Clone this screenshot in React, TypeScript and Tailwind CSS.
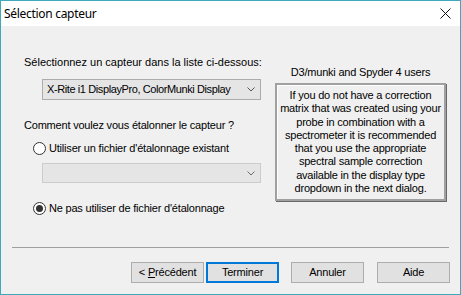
import { useState } from 'react'

const Chevron = ({ color }: { color: string }) => (
  <svg width="8" height="5" viewBox="0 0 8 5" className="block">
    <path d="M0.5 0.5 L4 4 L7.5 0.5" fill="none" stroke={color} strokeWidth="1" />
  </svg>
)

const Radio = ({ checked, label, onClick }: { checked: boolean; label: string; onClick: () => void }) => (
  <div className="flex items-center h-[13px] ml-[9px] cursor-default" onClick={onClick}>
    <div className="w-[13px] h-[13px] rounded-full border border-[#333333] bg-white flex items-center justify-center">
      {checked && <div className="w-[7px] h-[7px] rounded-full bg-[#333333]" />}
    </div>
    <span className="ml-[3px] whitespace-nowrap leading-[13px]">{label}</span>
  </div>
)

const Button = ({ children, primary }: { children: React.ReactNode; primary?: boolean }) => (
  <button
    className={
      primary
        ? 'w-[73px] h-[21px] bg-[#e1e1e1] border-2 border-[#0078d7] flex items-center justify-center leading-[13px]'
        : 'w-[73px] h-[21px] bg-[#e1e1e1] border border-[#adadad] flex items-center justify-center leading-[13px]'
    }
  >
    {children}
  </button>
)

const App = (): JSX.Element => {
  const [mode, setMode] = useState(1)
  return (
    <div
      className="w-[461px] h-[295px] border border-[#3fa9bb] bg-[#f0f0f0] flex flex-col text-black text-[11px] tracking-[-0.2px]"
      style={{ fontFamily: '"Liberation Sans", Arial, sans-serif' }}
    >
      <div className="h-[25px] bg-white flex items-center justify-between pl-[3px] pr-[9px]">
        <span className="text-[12px] tracking-[-0.3px]" style={{ fontFamily: '"Noto Sans", "Open Sans", sans-serif' }}>
          Sélection capteur
        </span>
        <svg width="11" height="11" viewBox="0 0 11 11">
          <path d="M0.5 0.5 L10.5 10.5 M10.5 0.5 L0.5 10.5" stroke="#111" strokeWidth="1" />
        </svg>
      </div>

      <div className="flex-1 flex flex-col">
        <div className="flex-1 flex pt-[30px]">
          <div className="ml-[23px] w-[237px] flex flex-col">
            <div className="leading-[13px] whitespace-nowrap tracking-normal">Sélectionnez un capteur dans la liste ci-dessous:</div>
            <div className="ml-[18px] mt-[10px] w-[219px] h-[21px] bg-[#e5e5e5] border border-[#acacac] flex items-center justify-between pl-[4px] pr-[5px]">
              <span className="whitespace-nowrap tracking-[-0.4px]">X-Rite i1 DisplayPro, ColorMunki Display</span>
              <Chevron color="#555555" />
            </div>
            <div className="mt-[19px] leading-[13px] whitespace-nowrap">Comment voulez vous étalonner le capteur ?</div>
            <div className="mt-[10px]">
              <Radio checked={mode === 0} label="Utiliser un fichier d'étalonnage existant" onClick={() => setMode(0)} />
            </div>
            <div className="ml-[18px] mt-[8px] w-[219px] h-[20px] bg-[#e5e5e5] border border-[#cccccc] flex items-center justify-end pr-[5px]">
              <Chevron color="#6d6d6d" />
            </div>
            <div className="mt-[19px]">
              <Radio checked={mode === 1} label="Ne pas utiliser de fichier d'étalonnage" onClick={() => setMode(1)} />
            </div>
          </div>

          <div className="ml-[14px] w-[171px] flex flex-col">
            <div className="mt-[10px] leading-[13px] text-center whitespace-nowrap">D3/munki and Spyder 4 users</div>
            <div className="mt-[4px] h-[118px] border-2 border-t-[#a0a0a0] border-l-[#a0a0a0] border-r-[#a0a0a0] border-b-[#a0a0a0] shadow-[inset_1px_1px_0_#ffffff,1px_1px_0_#696969] pt-[4px] text-center leading-[13.3px] whitespace-nowrap">
              If you do not have a correction<br />
              matrix that was created using your<br />
              probe in combination with a<br />
              spectrometer it is recommended<br />
              that you use the appropriate<br />
              spectral sample correction<br />
              available in the display type<br />
              dropdown in the next dialog.
            </div>
          </div>
        </div>

        <div className="ml-[11px] w-[437px] h-px bg-[#a0a0a0]" />
        <div className="mt-[14px] mb-[11px] flex justify-end pr-[10px]">
          <Button>
            &lt; <span className="underline ml-[3px]">P</span>récédent
          </Button>
          <div className="ml-[2px]">
            <Button primary>Terminer</Button>
          </div>
          <div className="ml-[12px]">
            <Button>Annuler</Button>
          </div>
          <div className="ml-[13px]">
            <Button>Aide</Button>
          </div>
        </div>
      </div>
    </div>
  )
}

export default App
